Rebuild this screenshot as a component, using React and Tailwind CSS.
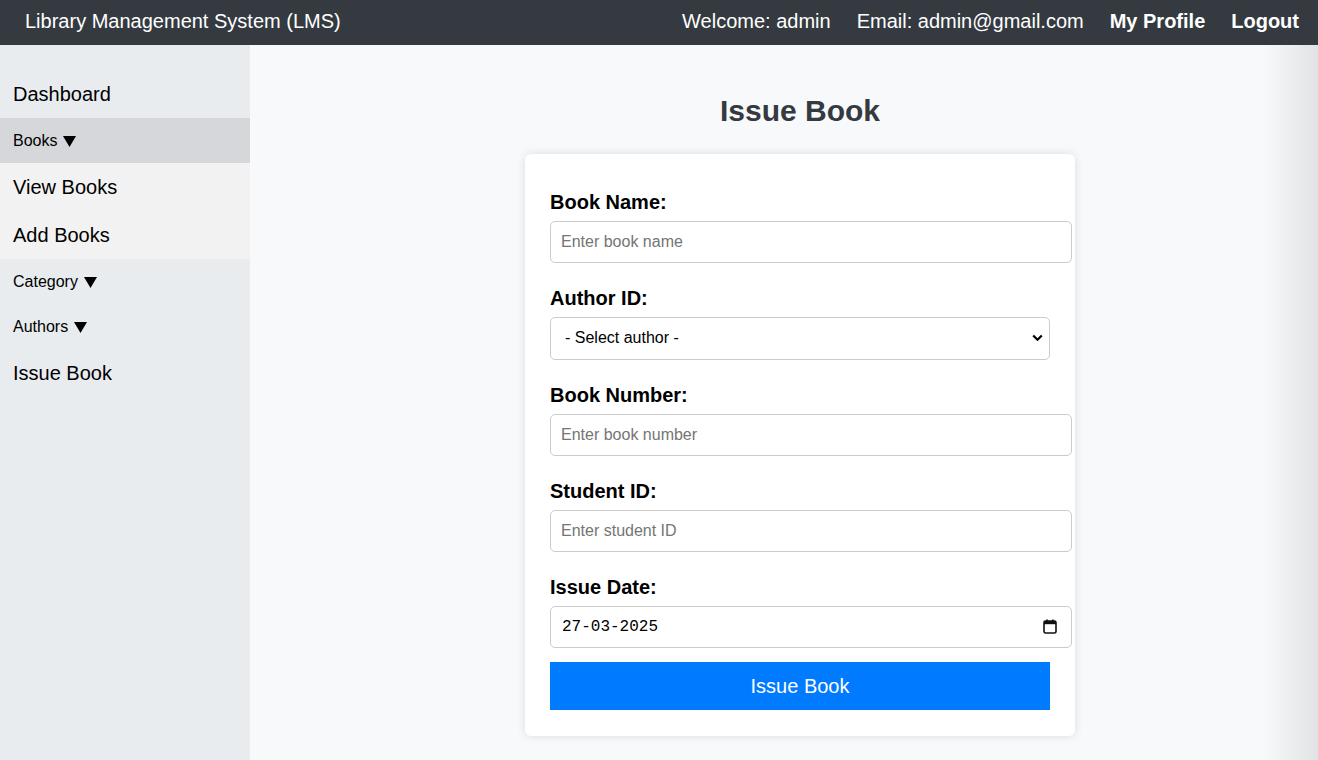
import React from "react"

const sans = { fontFamily: '"Liberation Sans", Arial, sans-serif' }

function Navbar() {
  return (
    <header className="h-[45px] bg-[#343a40] text-white flex items-center justify-between pl-[25px] pr-[19px] pb-[3px] text-[20px]">
      <span>Library Management System (LMS)</span>
      <nav className="flex items-center gap-[26px]">
        <span>Welcome: admin</span>
        <span>Email: admin@gmail.com</span>
        <a href="#" className="font-bold">My Profile</a>
        <a href="#" className="font-bold">Logout</a>
      </nav>
    </header>
  )
}

function Caret() {
  return (
    <svg className="ml-[6px] mt-[1px]" width="13" height="11" viewBox="0 0 13 11">
      <path d="M0 0 H13 L6.5 11 Z" fill="#000" />
    </svg>
  )
}

function Sidebar() {
  return (
    <aside className="w-[250px] shrink-0 bg-[#e9ecef] pt-[25px] text-black">
      <div className="h-[48px] flex items-center px-[13px] text-[20px]">Dashboard</div>
      <div className="h-[45px] flex items-center px-[13px] text-[16px] bg-[#d6d7da]">
        Books<Caret />
      </div>
      <div className="bg-[#f2f2f2]">
        <div className="h-[48px] flex items-center px-[13px] text-[20px]">View Books</div>
        <div className="h-[48px] flex items-center px-[13px] text-[20px]">Add Books</div>
      </div>
      <div className="h-[45px] flex items-center px-[13px] text-[16px]">
        Category<Caret />
      </div>
      <div className="h-[45px] flex items-center px-[13px] text-[16px]">
        Authors<Caret />
      </div>
      <div className="h-[48px] flex items-center px-[13px] text-[20px]">Issue Book</div>
    </aside>
  )
}

function Field({ label, children, last }) {
  return (
    <div className={last ? "mb-[14px]" : "mb-[24px]"}>
      <label className="block text-[20px] leading-[23px] font-bold text-black mb-[7px]">{label}</label>
      {children}
    </div>
  )
}

const inputCls =
  "block w-[522px] h-[42px] px-[10px] border border-[#cccccc] rounded-[5px] text-[16px] bg-white text-black placeholder:text-[#757575] outline-none"

function IssueForm() {
  return (
    <form className="w-[550px] bg-white rounded-[6px] shadow-[0_0_10px_rgba(0,0,0,0.12)] pt-[36.5px] pb-[26px] px-[25px]">
      <Field label="Book Name:">
        <input className={inputCls} style={sans} placeholder="Enter book name" />
      </Field>
      <Field label="Author ID:">
        <div className="relative w-[500px]">
          <select
            className="block w-full h-[43px] pl-[14px] pr-[30px] border border-[#cccccc] rounded-[5px] text-[16px] bg-white text-black appearance-none outline-none"
            style={sans}
            defaultValue=""
          >
            <option value="">- Select author -</option>
          </select>
          <svg
            className="absolute right-[7px] top-[17px] pointer-events-none"
            width="11"
            height="8"
            viewBox="0 0 11 8"
          >
            <path d="M1.2 1.5 L5.5 5.8 L9.8 1.5" fill="none" stroke="#000" strokeWidth="2.2" />
          </svg>
        </div>
      </Field>
      <Field label="Book Number:">
        <input className={inputCls} style={sans} placeholder="Enter book number" />
      </Field>
      <Field label="Student ID:">
        <input className={inputCls} style={sans} placeholder="Enter student ID" />
      </Field>
      <Field label="Issue Date:" last>
        <div className="w-[522px] h-[42px] pl-[11px] pr-[14px] border border-[#cccccc] rounded-[5px] bg-white flex items-center justify-between">
          <span className="text-[16px] text-black" style={{ fontFamily: '"Liberation Mono", "DejaVu Sans Mono", monospace' }}>
            27-03-2025
          </span>
          <svg width="14" height="15" viewBox="0 0 14 15">
            <rect x="1" y="2" width="12" height="12" rx="1.5" fill="none" stroke="#111" strokeWidth="1.6" />
            <rect x="1" y="2" width="12" height="3.2" fill="#111" />
            <rect x="3.3" y="0.5" width="1.6" height="2.5" fill="#111" />
            <rect x="9.1" y="0.5" width="1.6" height="2.5" fill="#111" />
          </svg>
        </div>
      </Field>
      <button type="button" className="block w-[500px] h-[48px] bg-[#007bff] text-white text-[20px]" style={sans}>
        Issue Book
      </button>
    </form>
  )
}

export default function App() {
  return (
    <div className="min-h-[760px] flex flex-col bg-[#f8f9fa]" style={sans}>
      <Navbar />
      <div className="flex flex-1">
        <Sidebar />
        <main className="relative flex-1 flex flex-col items-center pt-[48px] pl-[32px] overflow-hidden">
          <h2 className="text-[30px] leading-[36px] font-bold text-[#343a40] mb-[25px]">Issue Book</h2>
          <IssueForm />
          <div className="absolute right-0 top-0 bottom-0 w-[55px] bg-gradient-to-r from-transparent to-[rgba(0,0,0,0.09)] pointer-events-none" />
        </main>
      </div>
    </div>
  )
}
